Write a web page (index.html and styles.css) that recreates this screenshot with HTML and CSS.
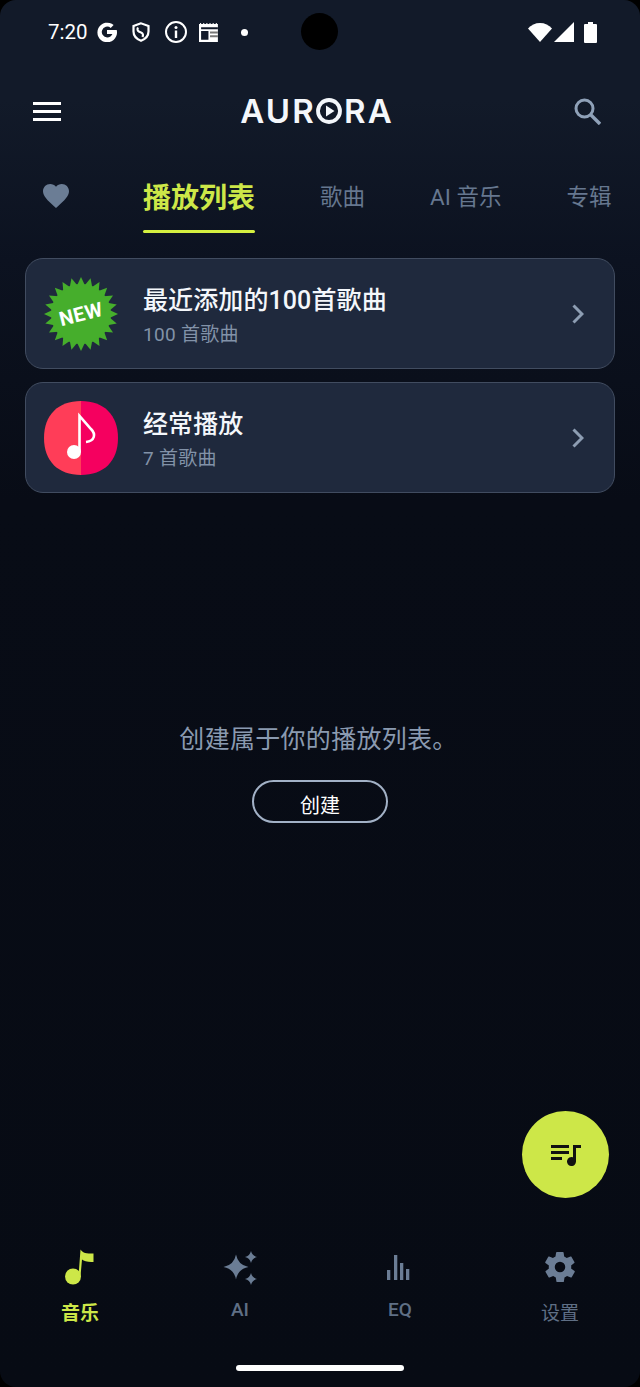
FILE: index.html
```html
<!DOCTYPE html>
<html lang="zh">
<head>
  <meta charset="UTF-8">
  <meta name="viewport" content="width=device-width, initial-scale=1.0">
  <title>Aurora</title>
  <link rel="stylesheet" href="styles.css">
</head>
<body>
  <div class="screen">
    <div class="camera"></div>

    <div class="status-bar">
      <span class="time">7:20</span>
      <svg class="st-g" viewBox="0 0 20 20"><path d="M19.700 8H10v4h5.400c-.7 2-2.700 3.400-5.200 3.400a5.400 5.400 0 1 1 3.500-9.500l2.900-2.900A9.800 9.800 0 1 0 20 10c0-.7-.1-1.400-.3-2z" fill="#fff"/></svg>
      <svg class="st-shield" viewBox="0 0 18 20"><path d="M9 1.300 1.500 4v5.500c0 4.200 3 7.500 7.500 9.200 4.500-1.700 7.500-5 7.500-9.200V4z" fill="none" stroke="#fff" stroke-width="2.200"/><path d="M6 5.500c-1.500 2.500 0 4 3 5 2 .8 2.500 2.300 1.500 4.500" fill="none" stroke="#fff" stroke-width="2.200"/></svg>
      <svg class="st-info" viewBox="0 0 24 24"><circle cx="12" cy="12" r="10" fill="none" stroke="#fff" stroke-width="2"/><circle cx="12" cy="7.500" r="1.500" fill="#fff"/><rect x="10.800" y="10.500" width="2.400" height="7.500" fill="#fff"/></svg>
      <svg class="st-cal" viewBox="0 0 20 18"><path d="M0 1h1V0h1v1h2V0h1v1h2V0h1v1h2V0h1v1h2V0h1v1h2V0h1v1h1v17H0z" fill="#fff"/><path d="M2 4h16v2H2zM2 7.500h7V16H2z" fill="#121a29"/><path d="M10.500 8h7.500v2h-7.500zM10.500 11.500h7.500v2h-7.500z" fill="#777"/></svg>
      <span class="st-dot"></span>
      <div class="st-right">
        <svg class="st-wifi" viewBox="0 0 24 20"><path d="M0 6.500C3 3 7.300 1 12 1s9 2 12 5.500L12 20z" fill="#fff"/></svg>
        <svg class="st-signal" viewBox="0 0 20 20"><path d="M20 0v20H0z" fill="#fff"/></svg>
        <svg class="st-batt" viewBox="0 0 13 21"><path d="M4 0h5v2h3a1 1 0 0 1 1 1v17a1 1 0 0 1-1 1H1a1 1 0 0 1-1-1V3a1 1 0 0 1 1-1h3z" fill="#fff"/></svg>
      </div>
    </div>

    <header class="app-bar">
      <div class="menu"><span></span><span></span><span></span></div>
      <div class="logo">
        <span>AUR</span>
        <svg class="logo-o" viewBox="0 0 26 26"><circle cx="13" cy="13" r="11" fill="none" stroke="#f4f7fb" stroke-width="3.800"/><path d="M10 7.500v11l8.500-5.500z" fill="#f4f7fb"/></svg>
        <span>RA</span>
      </div>
      <svg class="search" viewBox="0 0 28 28"><circle cx="11.500" cy="11.500" r="8.500" fill="none" stroke="#8fa1b8" stroke-width="3"/><path d="M17.500 17.500 27 27" stroke="#8fa1b8" stroke-width="3.400"/></svg>
    </header>

    <nav class="tabs">
      <svg class="heart" viewBox="0 0 26 24"><path d="M13 24 11 22.200C4.500 16.300 0 12.300 0 7.300 0 3.200 3.200 0 7.200 0 9.500 0 11.600 1 13 2.700 14.400 1 16.500 0 18.800 0 22.800 0 26 3.200 26 7.300c0 5-4.500 9-11 14.900z" fill="#6b7d95"/></svg>
      <a class="tab tab-active">播放列表</a>
      <a class="tab tab-songs">歌曲</a>
      <a class="tab tab-ai">AI 音乐</a>
      <a class="tab tab-albums">专辑</a>
    </nav>

    <section class="list">
      <div class="card">
        <svg class="thumb" viewBox="0 0 74 74">
          <defs>
            <path id="spike" d="M37 0 41 8.500H33z"/>
            <g id="quarter">
              <use href="#spike"/>
              <use href="#spike" transform="rotate(15 37 37)"/>
              <use href="#spike" transform="rotate(30 37 37)"/>
              <use href="#spike" transform="rotate(45 37 37)"/>
              <use href="#spike" transform="rotate(60 37 37)"/>
              <use href="#spike" transform="rotate(75 37 37)"/>
            </g>
          </defs>
          <g fill="#46ae2c">
            <circle cx="37" cy="37" r="30"/>
            <use href="#quarter"/>
            <use href="#quarter" transform="rotate(90 37 37)"/>
            <use href="#quarter" transform="rotate(180 37 37)"/>
            <use href="#quarter" transform="rotate(270 37 37)"/>
          </g>
          <text class="new-text" x="37" y="44" text-anchor="middle" transform="rotate(-14 37 37)">NEW</text>
        </svg>
        <div class="card-text">
          <div class="card-title">最近添加的100首歌曲</div>
          <div class="card-sub">100 首歌曲</div>
        </div>
        <svg class="chevron" viewBox="0 0 12 20"><path d="M1.500 1.500 10 10l-8.500 8.500" fill="none" stroke="#8d9db3" stroke-width="3"/></svg>
      </div>
      <div class="card">
        <svg class="thumb" viewBox="0 0 74 74">
          <path d="M37 0C60 0 74 14 74 37S60 74 37 74z" fill="#f5005f"/>
          <path d="M37 0C14 0 0 14 0 37s14 37 37 37z" fill="#ff3d58"/>
          <circle cx="30" cy="51" r="7" fill="#fff"/>
          <path d="M35.500 51V15L47 28c5 5 4 12-5 13" fill="none" stroke="#fff" stroke-width="2.600"/>
        </svg>
        <div class="card-text">
          <div class="card-title">经常播放</div>
          <div class="card-sub">7 首歌曲</div>
        </div>
        <svg class="chevron" viewBox="0 0 12 20"><path d="M1.500 1.500 10 10l-8.500 8.500" fill="none" stroke="#8d9db3" stroke-width="3"/></svg>
      </div>
    </section>

    <section class="empty">
      <p class="empty-text">创建属于你的播放列表。</p>
      <button class="create-btn">创建</button>
    </section>

    <button class="fab">
      <svg viewBox="0 0 30 22"><path d="M0 1h18v3H0zM0 7h18v3H0zM0 13h11v3H0z" fill="#111"/><path d="M22 1h8v3h-5v13.500a4.500 4.500 0 1 1-3-4.200z" fill="#111"/></svg>
    </button>

    <nav class="bottom-nav">
      <a class="nav-item nav-active">
        <svg class="nav-icon" viewBox="0 0 30 36"><circle cx="8" cy="27.500" r="8" fill="#cde748"/><path d="M13.500 27.500 15.500 0.500C17 3 20 5 28.500 4.500V13C23 13.500 19 12 17 10.500L15.500 27.500z" fill="#cde748"/></svg>
        <span>音乐</span>
      </a>
      <a class="nav-item">
        <svg class="nav-icon" viewBox="0 0 36 36"><path d="M14 5.500Q16 16 26.500 18 16 20 14 30.500 12 20 1.500 18 12 16 14 5.500zM29 2Q30.200 6.800 35 8 30.200 9.200 29 14 27.800 9.200 23 8 27.800 6.800 29 2zM29 24Q30.200 28.800 35 30 30.200 31.200 29 36 27.800 31.200 23 30 27.800 28.800 29 24z" fill="#6b7d95"/></svg>
        <span class="nav-latin">AI</span>
      </a>
      <a class="nav-item">
        <svg class="nav-icon" viewBox="0 0 36 36"><path d="M5 21h3.300v10H5zM12 6h3.300v25H12zM18 14h3.300v17H18zM24 20h3.300v11H24z" fill="#6b7d95"/></svg>
        <span class="nav-latin">EQ</span>
      </a>
      <a class="nav-item">
        <svg class="nav-icon" viewBox="0 0 24 24"><path d="M19.400 13c0-.3.100-.6.100-1s0-.7-.1-1l2.100-1.600c.2-.2.300-.4.100-.7l-2-3.500c-.1-.2-.4-.3-.6-.2l-2.500 1c-.5-.4-1.100-.7-1.700-1l-.4-2.600c0-.2-.2-.4-.5-.4h-4c-.2 0-.4.200-.5.400l-.4 2.600c-.6.300-1.200.6-1.700 1l-2.500-1c-.2-.1-.5 0-.6.200l-2 3.500c-.1.200-.1.500.1.700L4.600 11c0 .3-.1.600-.1 1s0 .7.1 1l-2.100 1.600c-.2.200-.3.400-.1.700l2 3.500c.1.200.4.300.6.200l2.500-1c.5.400 1.100.7 1.700 1l.4 2.600c.1.200.3.400.5.400h4c.3 0 .5-.2.500-.4l.4-2.600c.6-.3 1.200-.6 1.700-1l2.500 1c.2.100.5 0 .6-.2l2-3.500c.1-.2.100-.5-.1-.7zM12 15.500a3.500 3.500 0 1 1 0-7 3.500 3.500 0 0 1 0 7z" fill="#6b7d95"/></svg>
        <span>设置</span>
      </a>
    </nav>

    <div class="home-bar"></div>
  </div>
</body>
</html>
```

FILE: styles.css
```css
* {
  box-sizing: border-box;
}
body {
  margin: 0;
  background: #000;
  font-family: Roboto, "Noto Sans CJK SC", sans-serif;
}
.screen {
  position: relative;
  width: 640px;
  height: 1387px;
  overflow: hidden;
  border-radius: 16px;
  display: flex;
  flex-direction: column;
  background: linear-gradient(180deg, #121a29 0, #121a29 100px, #0c1220 260px, #080c16 500px, #070b14 100%);
}
.camera {
  position: absolute;
  left: 301px;
  top: 13px;
  width: 37px;
  height: 37px;
  border-radius: 50%;
  background: #000;
}

.status-bar {
  display: flex;
  align-items: center;
  height: 64px;
  padding: 0 43px 0 48px;
  color: #fff;
}
.time {
  font-size: 20.500px;
  width: 49px;
}
.st-g {
  width: 20px;
  height: 20px;
  margin-right: 15px;
}
.st-shield {
  width: 18px;
  height: 20px;
  margin-right: 14px;
}
.st-info {
  width: 24px;
  height: 24px;
  margin-right: 11px;
}
.st-cal {
  width: 21px;
  height: 19px;
  margin-right: 21px;
}
.st-dot {
  width: 7px;
  height: 7px;
  border-radius: 50%;
  background: #fff;
}
.st-right {
  margin-left: auto;
  display: flex;
  align-items: center;
  gap: 2px;
}
.st-wifi {
  width: 24px;
  height: 20px;
}
.st-signal {
  width: 20px;
  height: 20px;
  margin-right: 8px;
}
.st-batt {
  width: 13px;
  height: 21px;
}

.app-bar {
  display: flex;
  align-items: center;
  justify-content: space-between;
  height: 94px;
  padding: 0 39px 0 33px;
}
.menu {
  width: 28px;
  display: flex;
  flex-direction: column;
  gap: 5px;
}
.menu span {
  height: 3px;
  background: #fff;
}
.logo {
  display: flex;
  align-items: center;
  color: #f4f7fb;
  font-family: Inter, sans-serif;
  font-weight: 600;
  font-size: 33px;
  line-height: 30px;
  letter-spacing: 2.200px;
}
.logo-o {
  width: 26px;
  height: 26px;
  margin: 0 2px 0 0;
}
.search {
  width: 28px;
  height: 28px;
}

.tabs {
  position: relative;
  display: flex;
  align-items: flex-start;
  height: 100px;
  padding-top: 23px;
  white-space: nowrap;
}
.heart {
  width: 26px;
  height: 24px;
  margin: 3px 74px 0 43px;
}
.tab {
  font-size: 22.500px;
  line-height: 32px;
  color: #66778f;
}
.tab-active {
  position: relative;
  font-size: 28px;
  font-weight: 700;
  color: #cde748;
  height: 48px;
  margin-top: 2px;
}
.tab-active::after {
  content: "";
  position: absolute;
  left: 0;
  right: 0;
  bottom: -2px;
  height: 3px;
  border-radius: 2px;
  background: #d5f040;
}
.tab-songs {
  margin-left: 65px;
}
.tab-ai {
  margin-left: 65px;
}
.tab-albums {
  margin-left: 65px;
}

.list {
  display: flex;
  flex-direction: column;
  gap: 13px;
  padding: 0 25px;
}
.card {
  display: flex;
  align-items: center;
  height: 111px;
  padding: 0 30px 0 18px;
  border: 1px solid #414c60;
  border-radius: 18px;
  background: #1f293d;
}
.thumb {
  width: 74px;
  height: 74px;
  flex: none;
}
.new-text {
  font-family: Roboto, sans-serif;
  font-weight: 700;
  font-size: 20px;
  letter-spacing: 0.5px;
  fill: #fff;
}
.card-text {
  flex: 1;
  margin-left: 25px;
  padding-top: 4px;
}
.card-title {
  font-size: 25px;
  line-height: 34px;
  font-weight: 500;
  letter-spacing: 0.1px;
  color: #f4f7fb;
}
.card-sub {
  margin-top: 4px;
  font-size: 19px;
  line-height: 26px;
  color: #8292a8;
  letter-spacing: 0.3px;
}
.chevron {
  width: 12px;
  height: 20px;
}

.empty {
  display: flex;
  flex-direction: column;
  align-items: center;
  padding-top: 227px;
  flex: 1;
}
.empty-text {
  margin: 0 0 0 -3px;
  font-size: 25px;
  line-height: 40px;
  letter-spacing: 0.3px;
  color: #8a9ab0;
}
.create-btn {
  margin-top: 20px;
  width: 136px;
  height: 43px;
  border: 2px solid #a2b1c6;
  border-radius: 22px;
  background: transparent;
  color: #fff;
  font-family: inherit;
  font-size: 20px;
  padding: 5px 0 0;
}

.fab {
  position: absolute;
  left: 522px;
  top: 1111px;
  width: 87px;
  height: 87px;
  border: none;
  border-radius: 50%;
  background: #cde748;
  display: flex;
  align-items: center;
  justify-content: center;
  padding: 0;
}
.fab svg {
  width: 30px;
  height: 22px;
}

.bottom-nav {
  display: grid;
  grid-template-columns: repeat(4, 160px);
  height: 150px;
}
.nav-item {
  display: flex;
  flex-direction: column;
  align-items: center;
  padding-top: 12px;
  font-size: 19px;
  line-height: 28px;
  color: #5f6f85;
}
.nav-active {
  color: #cde748;
  font-weight: 700;
}
.nav-latin {
  margin-top: -4px;
  font-weight: 500;
}
.nav-icon {
  width: 36px;
  height: 36px;
  margin-bottom: 15px;
}

.home-bar {
  position: absolute;
  left: 236px;
  top: 1365px;
  width: 168px;
  height: 6px;
  border-radius: 3px;
  background: #fff;
}
```
